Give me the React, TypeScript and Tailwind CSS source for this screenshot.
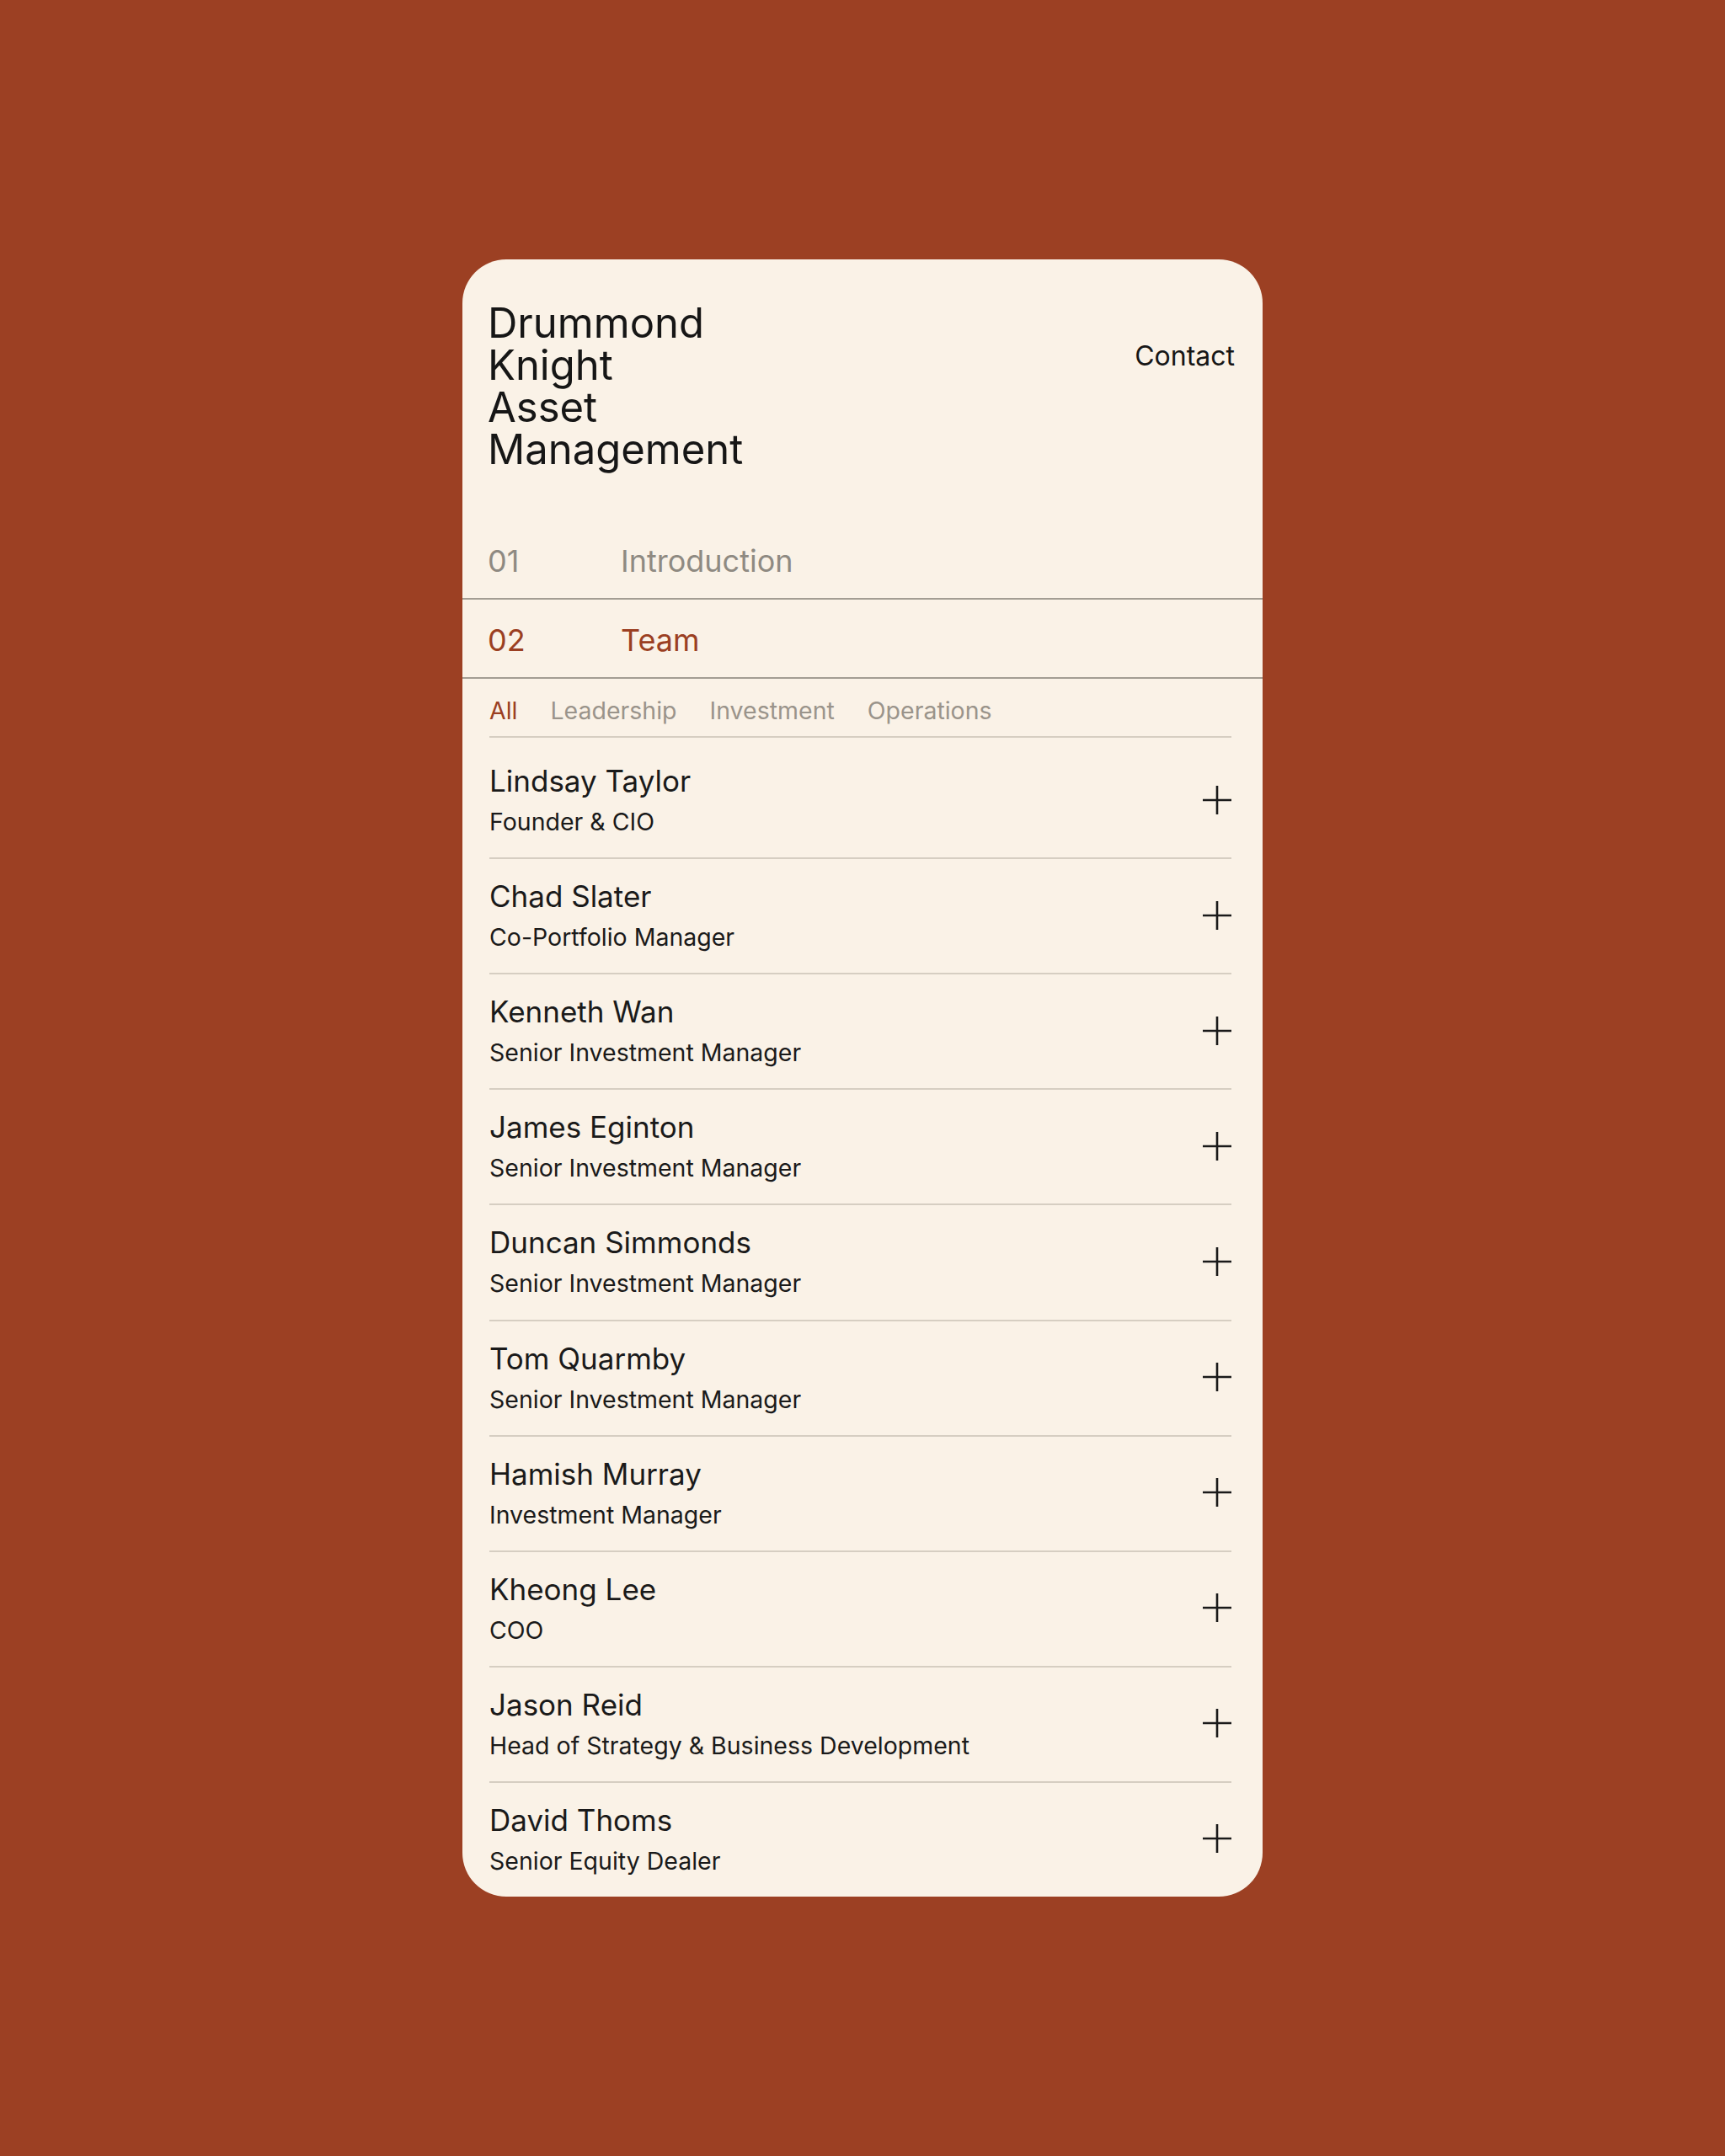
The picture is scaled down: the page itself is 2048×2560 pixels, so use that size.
const navItems = [
  { num: "01", label: "Introduction", active: false },
  { num: "02", label: "Team", active: true },
];

const filters = ["All", "Leadership", "Investment", "Operations"];

const team = [
  { name: "Lindsay Taylor", role: "Founder & CIO" },
  { name: "Chad Slater", role: "Co-Portfolio Manager" },
  { name: "Kenneth Wan", role: "Senior Investment Manager" },
  { name: "James Eginton", role: "Senior Investment Manager" },
  { name: "Duncan Simmonds", role: "Senior Investment Manager" },
  { name: "Tom Quarmby", role: "Senior Investment Manager" },
  { name: "Hamish Murray", role: "Investment Manager" },
  { name: "Kheong Lee", role: "COO" },
  { name: "Jason Reid", role: "Head of Strategy & Business Development" },
  { name: "David Thoms", role: "Senior Equity Dealer" },
];

function PlusIcon() {
  return (
    <svg width="34" height="34" viewBox="0 0 34 34" className="shrink-0 text-[#1a1a1a]">
      <path d="M17 0v34M0 17h34" stroke="currentColor" strokeWidth="2.6" fill="none" />
    </svg>
  );
}

export default function App() {
  return (
    <div className="flex min-h-screen w-full items-center justify-center bg-[#9c4023] font-['Inter',sans-serif]">
      <div className="w-[950px] overflow-hidden rounded-[52px] bg-[#faf2e7]">
        <header className="flex items-start justify-between pl-[30px] pr-[33px] pt-[51px]">
          <h1 className="text-[49px] font-normal leading-[50px] text-[#161616]">
            Drummond
            <br />
            Knight
            <br />
            Asset
            <br />
            Management
          </h1>
          <a className="mt-[44px] text-[32px] leading-[40px] text-[#161616]">Contact</a>
        </header>

        <nav className="mt-[59px]">
          {navItems.map((item) => (
            <div
              key={item.num}
              className={
                "flex border-b-2 border-[#a39d93] pl-[30px] pb-[26px] pt-[30px] text-[36px] leading-[36px] " +
                (item.active ? "text-[#9b3f22]" : "text-[#8f8a82]")
              }
            >
              <span className="w-[158px]">{item.num}</span>
              <span>{item.label}</span>
            </div>
          ))}
        </nav>

        <section className="pl-[32px] pr-[37px]">
          <div className="flex gap-[39px] border-b-2 border-[#d6cec2] pb-[12px] pt-[20px] text-[28.5px] leading-[36px]">
            {filters.map((f, i) => (
              <button key={f} className={i === 0 ? "text-[#9b3f22]" : "text-[#9a948b]"}>
                {f}
              </button>
            ))}
          </div>

          <ul className="pt-[7px]">
            {team.map((person, i) => (
              <li
                key={person.name}
                className={
                  "flex items-center justify-between pb-[24.1px] pt-[22px] " +
                  (i < team.length - 1 ? "border-b-2 border-[#d6cec2]" : "")
                }
              >
                <div className="text-[#1a1a1a]">
                  <div className="text-[35px] leading-[44px]">{person.name}</div>
                  <div className="mt-[9px] text-[28.5px] leading-[36px]">{person.role}</div>
                </div>
                <PlusIcon />
              </li>
            ))}
          </ul>
        </section>
      </div>
    </div>
  );
}
